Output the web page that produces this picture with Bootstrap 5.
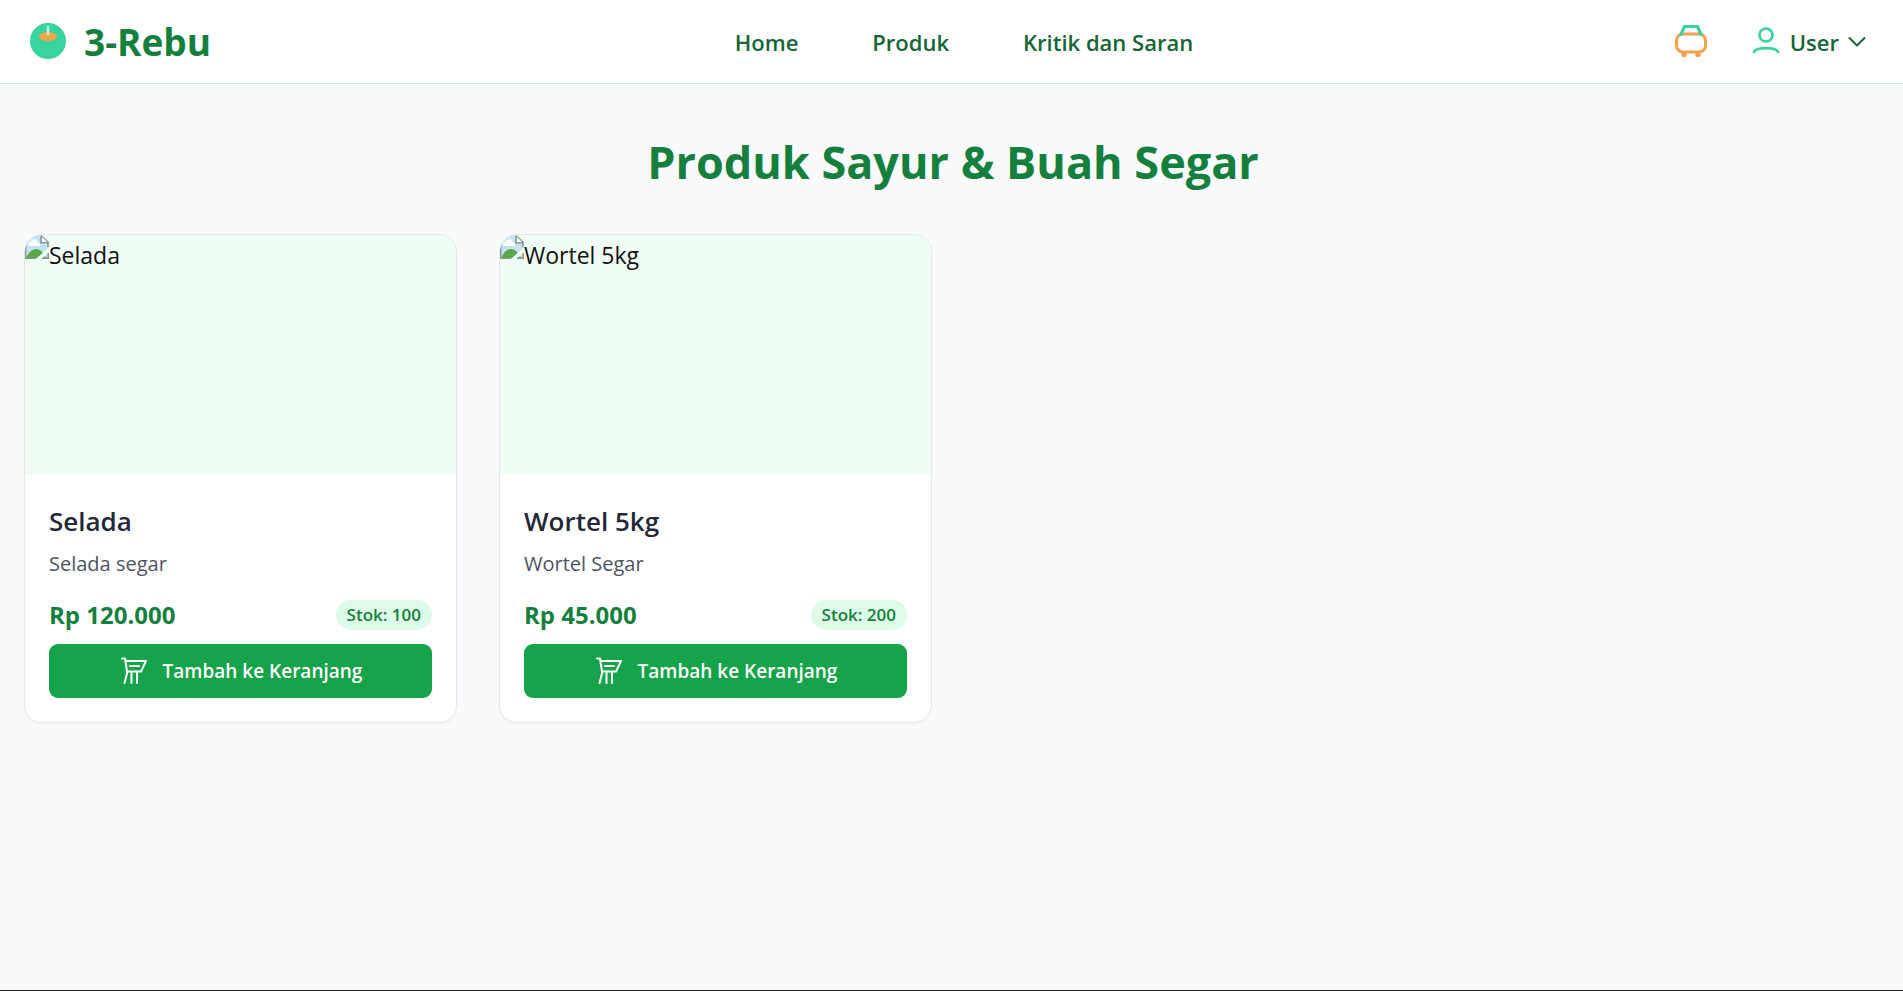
<!DOCTYPE html>
<html lang="id">
<head>
<meta charset="utf-8">
<meta name="viewport" content="width=device-width, initial-scale=1">
<title>3-Rebu</title>
<link href="https://cdn.jsdelivr.net/npm/bootstrap@5.3.0/dist/css/bootstrap.min.css" rel="stylesheet">
<style>
  body { font-family: "Open Sans", "Noto Sans", sans-serif; font-size: 23px; line-height: 36px; background: #f9fafb; color: #111; border-bottom: 1px solid #1e1e1e; }
  .site-nav { min-height: 84px; padding: 0 37px 0 30px; background: #fff; border-bottom: 1px solid #bbf7d0; }
  .brand { color: #15803d; font-size: 37px; font-weight: 700; gap: 18px; }
  .brand:hover { color: #15803d; }
  .brand svg { margin-bottom: 2px; }
  .menu { gap: 74px; padding-left: 44px; }
  .menu a, .user-toggle { color: #166534; font-weight: 600; font-size: 22px; line-height: 36px; }
  .account { gap: 42px; }
  .user-toggle { gap: 9px; }
  .catalog { padding: 48px 21px 48px 24px; }
  .page-title { color: #15803d; font-size: 45px; font-weight: 700; line-height: 60px; margin-bottom: 42px; }
  .products { --bs-gutter-x: 42px; --bs-gutter-y: 42px; }
  .product { border: 1px solid #e5e7eb; border-radius: 18px; overflow: hidden; box-shadow: 0 2px 3px rgba(0, 0, 0, .03); }
  .photo { height: 240px; background: #f0fdf4; line-height: 40px; }
  .product .card-body { padding: 28px 24px 24px; }
  .name { color: #1f2937; font-size: 26px; font-weight: 600; line-height: 36px; margin-bottom: 7px; }
  .desc { color: #4b5563; font-size: 20px; line-height: 36px; margin-bottom: 15px; }
  .price { color: #15803d; font-size: 24px; font-weight: 700; line-height: 36px; }
  .stock { color: #15803d; background: #dcfce7; font-size: 17px; font-weight: 600; line-height: 30px; padding: 0 11px; }
  .add { --bs-btn-color: #fff; --bs-btn-bg: #16a34a; --bs-btn-hover-color: #fff; --bs-btn-hover-bg: #15803d; height: 54px; border: 0; border-radius: 9px; font-size: 19px; font-weight: 600; gap: 14px; margin-top: 11px; padding: 0; }
</style>
</head>
<body class="min-vh-100">
<header class="site-nav d-flex align-items-center justify-content-between">
  <a href="#" class="brand d-flex align-items-center text-decoration-none">
    <svg width="36" height="36" viewBox="0 0 36 36" aria-hidden="true">
      <circle cx="18" cy="18" r="18" fill="#38d39f"/>
      <ellipse cx="18" cy="13.5" rx="9" ry="4.5" fill="#f4a24c"/>
      <path d="M18 4v7" stroke="#bbf7d0" stroke-width="2.6" stroke-linecap="round"/>
    </svg>
    3-Rebu
  </a>
  <nav class="menu d-flex">
    <a href="#" class="text-decoration-none">Home</a>
    <a href="#" class="text-decoration-none">Produk</a>
    <a href="#" class="text-decoration-none">Kritik dan Saran</a>
  </nav>
  <div class="account d-flex align-items-center">
    <a href="#" class="d-flex" aria-label="Keranjang">
      <svg width="36" height="36" viewBox="0 0 36 36" fill="none" stroke-width="3" aria-hidden="true">
        <rect x="3.5" y="10" width="29" height="18" rx="6.5" stroke="#f4a24c"/>
        <path d="M7.5 11.500l4-9h13l4 9" stroke="#38d39f" stroke-width="3.2"/>
        <circle cx="11" cy="30.500" r="2.700" fill="#f4a24c"/>
        <circle cx="25" cy="30.500" r="2.700" fill="#f4a24c"/>
      </svg>
    </a>
    <button type="button" class="user-toggle btn border-0 p-0 d-flex align-items-center" aria-expanded="false">
      <svg width="30" height="30" viewBox="0 0 30 30" fill="none" stroke="#38d39f" stroke-width="2.700" stroke-linecap="round" aria-hidden="true">
        <circle cx="15" cy="8" r="6.500"/>
        <path d="M3 25c2-5.300 22-5.300 24 0"/>
      </svg>
      User
      <svg width="18" height="18" viewBox="0 0 18 18" fill="none" stroke="#166534" stroke-width="2" stroke-linecap="round" stroke-linejoin="round" aria-hidden="true"><path d="M1.500 5l7.500 7.500L16.500 5"/></svg>
    </button>
  </div>
</header>

<main class="catalog">
  <h1 class="page-title text-center">Produk Sayur &amp; Buah Segar</h1>
  <div class="products row row-cols-1 row-cols-md-2 row-cols-xl-4">
    <div class="col">
      <article class="product card">
        <div class="photo d-flex align-items-start">
          <svg width="24" height="24" viewBox="0 0 24 24" aria-hidden="true"><use href="#missing"/></svg><span>Selada</span>
        </div>
        <div class="card-body">
          <h2 class="name">Selada</h2>
          <p class="desc">Selada segar</p>
          <div class="d-flex align-items-center justify-content-between">
            <span class="price">Rp 120.000</span>
            <span class="stock rounded-pill">Stok: 100</span>
          </div>
          <button type="button" class="add btn w-100 d-flex align-items-center justify-content-center">
            <svg width="30" height="30" viewBox="0 0 30 30" aria-hidden="true"><use href="#cart"/></svg>
            Tambah ke Keranjang
          </button>
        </div>
      </article>
    </div>
    <div class="col">
      <article class="product card">
        <div class="photo d-flex align-items-start">
          <svg width="24" height="24" viewBox="0 0 24 24" aria-hidden="true"><use href="#missing"/></svg><span>Wortel 5kg</span>
        </div>
        <div class="card-body">
          <h2 class="name">Wortel 5kg</h2>
          <p class="desc">Wortel Segar</p>
          <div class="d-flex align-items-center justify-content-between">
            <span class="price">Rp 45.000</span>
            <span class="stock rounded-pill">Stok: 200</span>
          </div>
          <button type="button" class="add btn w-100 d-flex align-items-center justify-content-center">
            <svg width="30" height="30" viewBox="0 0 30 30" aria-hidden="true"><use href="#cart"/></svg>
            Tambah ke Keranjang
          </button>
        </div>
      </article>
    </div>
  </div>
</main>

<svg class="d-none" aria-hidden="true">
  <defs>
    <g id="missing">
      <path d="M0 0h16l8 7v17H0z" fill="#c3e3f5"/>
      <path d="M3 10c0-3 3-3 4-5 3-2 6 0 6 3 3 0 3 3 1 3H4z" fill="#fff"/>
      <path d="M1 23c3-6 6-9 10-9s7 3 10 9z" fill="#5aa746"/>
      <path d="M24 12v5l-7 7h-6z" fill="#f0fdf4"/>
      <path d="M.7 0v23.300H11M16 .7v7h7M16 .7l7 6.500V12M23.300 18v5.300H17" fill="none" stroke="#8b998b" stroke-width="1.500"/>
      <path d="M17 2v5h5z" fill="#fff"/>
    </g>
    <g id="cart" fill="none" stroke="#fff" stroke-width="2" stroke-linecap="round" stroke-linejoin="round">
      <path d="M3 2.500H6L8 15.500H22L27 5H7M11 10h9M8 15.500v2L5.500 27M12.500 16v11M18 16v11"/>
    </g>
  </defs>
</svg>
<script src="https://cdn.jsdelivr.net/npm/bootstrap@5.3.0/dist/js/bootstrap.bundle.min.js"></script>
</body>
</html>
